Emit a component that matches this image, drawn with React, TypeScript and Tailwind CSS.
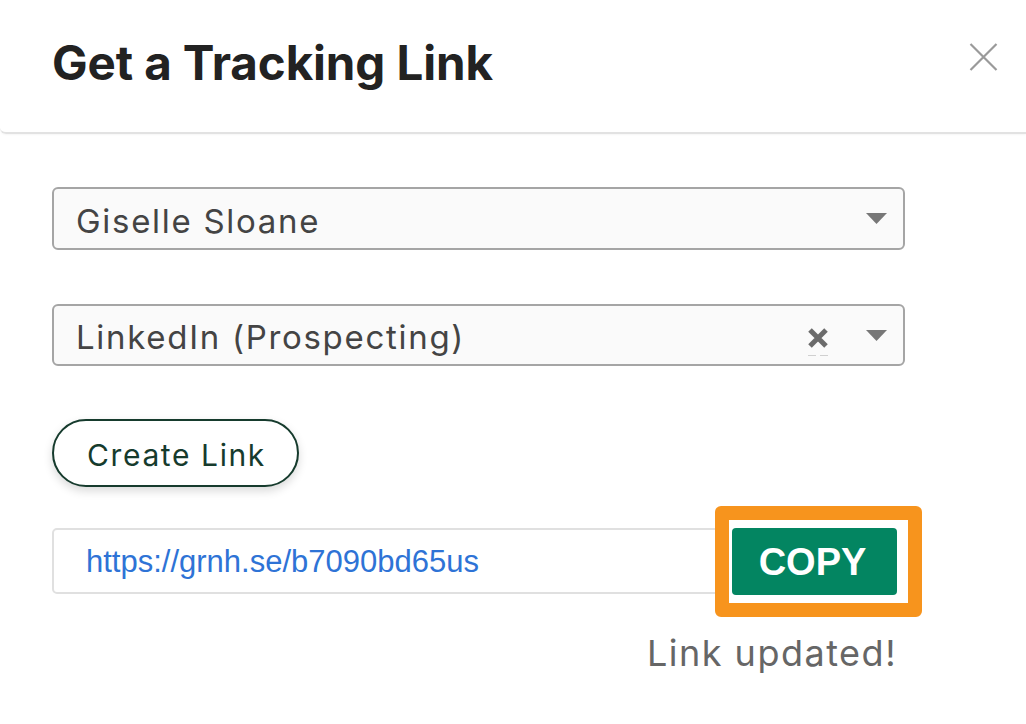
import React from "react";

function Caret() {
  return (
    <svg width="21" height="11" viewBox="0 0 21 11" className="shrink-0">
      <path d="M0 0 L21 0 L10.5 11 Z" fill="#777777" />
    </svg>
  );
}

function ClearX() {
  return (
    <div className="relative w-[22px] h-[30px] shrink-0">
      <svg width="22" height="22" viewBox="0 0 22 22">
        <path d="M3 3 L19 19 M19 3 L3 19" stroke="#6b6b6b" strokeWidth="5" strokeLinecap="butt" />
      </svg>
      <div className="absolute left-[1px] top-[28px] flex gap-[4px]">
        <div className="w-[8px] h-[1px] bg-[#d0d0d0]" />
        <div className="w-[8px] h-[1px] bg-[#d0d0d0]" />
      </div>
    </div>
  );
}

export default function App() {
  return (
    <div className="w-[1026px] h-[724px] bg-white overflow-hidden" style={{ fontFamily: "Inter, 'Noto Sans', sans-serif" }}>
      <div className="h-[134px] border-b-2 border-[#e2e2e2] rounded-bl-[6px] shadow-[0_1px_2px_rgba(0,0,0,0.04)] flex items-start justify-between pl-[52px] pr-[28px] pt-[33px]">
        <h1 className="text-[47.5px] font-bold text-[#222222] leading-[60px] tracking-[-0.1px]">Get a Tracking Link</h1>
        <svg width="29" height="28" viewBox="0 0 29 28" className="mt-[10px]">
          <path d="M1.5 1 L27.5 27 M27.5 1 L1.5 27" stroke="#9a9a9a" strokeWidth="2.2" />
        </svg>
      </div>

      <div className="pl-[52px] pr-[121px] pt-[53px] flex flex-col">
        <div className="h-[63px] rounded-[6px] border-2 border-[#a5a5a5] bg-[#fafafa] flex items-center pl-[22px] pr-[16px]">
          <span className="flex-1 mt-[5px] text-[33px] text-[#444444] leading-none tracking-[1.7px]">Giselle Sloane</span>
          <Caret />
        </div>

        <div className="h-[62px] mt-[54px] rounded-[6px] border-2 border-[#a5a5a5] bg-[#fafafa] flex items-center pl-[22px] pr-[16px]">
          <span className="flex-1 mt-[5px] text-[33px] text-[#444444] leading-none tracking-[1.7px]">LinkedIn (Prospecting)</span>
          <div className="mr-[37px] mt-[14px]"><ClearX /></div>
          <Caret />
        </div>

        <div className="mt-[53px] flex">
          <button className="h-[68px] w-[247px] rounded-full border-2 border-[#163b2d] bg-white text-[#163b2d] text-[30px] leading-none tracking-[1.6px] shadow-[0_4px_10px_rgba(0,0,0,0.15)]">
            <span className="block pt-[4px] pl-[2px]">Create Link</span>
          </button>
        </div>

        <div className="mt-[19px] flex items-start">
          <div className="mt-[22px] w-[686px] h-[66px] shrink-0 rounded-[5px] border-2 border-[#e0e0e0] flex items-center pl-[32px]" style={{ fontFamily: "'Liberation Sans', Arial, sans-serif" }}>
            <span className="text-[31px] text-[#2e73d6] leading-none">https://grnh.se/b7090bd65us</span>
          </div>
          <div className="-ml-[23px] w-[207px] h-[111px] shrink-0 rounded-[6px] border-[14px] border-[#f7941d] bg-white pt-[8px] pl-[3px]">
            <button className="w-[165px] h-[67px] rounded-[4px] bg-[#038561] text-white text-[38px] font-bold leading-none pr-[4px]" style={{ fontFamily: "'Liberation Sans', Arial, sans-serif" }}>
              COPY
            </button>
          </div>
        </div>

        <div className="flex justify-end pr-[8px] mt-[18px]">
          <span className="text-[36px] text-[#666666] tracking-[1.5px] leading-none">Link updated!</span>
        </div>
      </div>
    </div>
  );
}
